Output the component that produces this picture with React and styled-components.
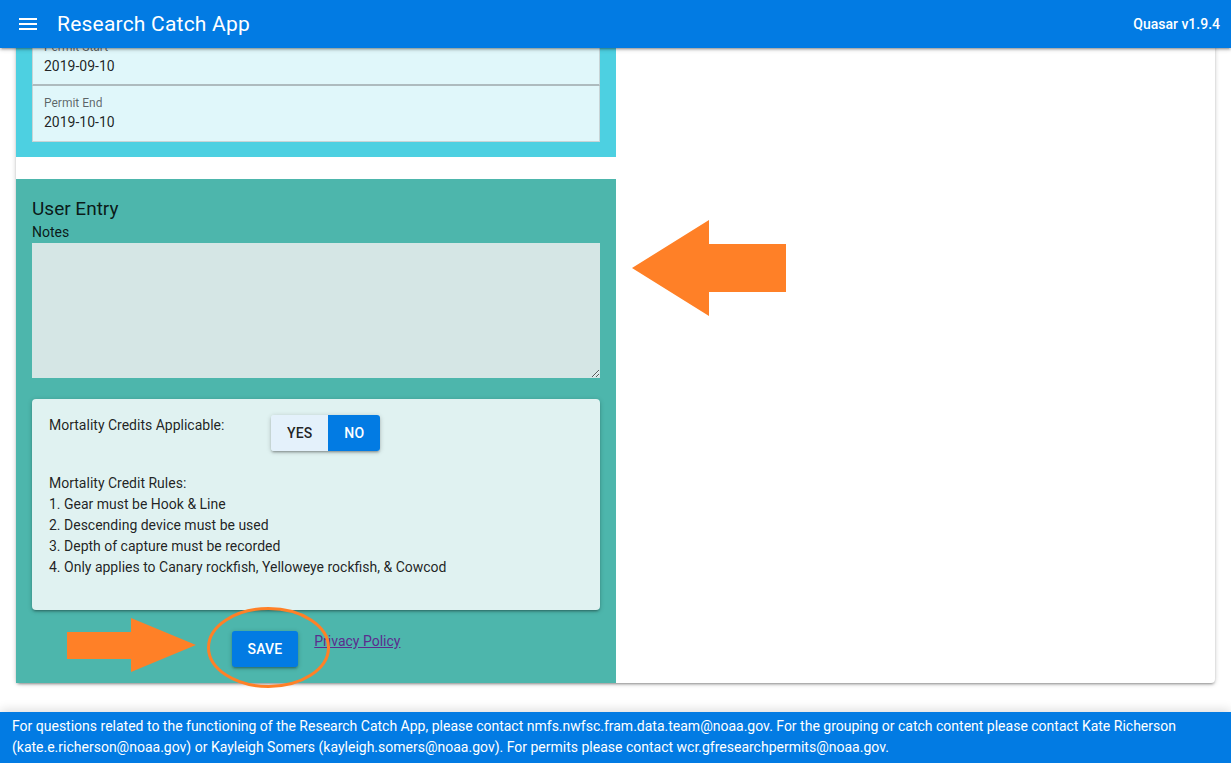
import React from "react";
import styled, { createGlobalStyle } from "styled-components";

const GlobalStyle = createGlobalStyle`
  html, body {
    margin: 0;
    padding: 0;
    height: 100%;
    overflow: hidden;
    background: #fff;
  }
  body {
    font-family: Roboto, "Liberation Sans", sans-serif;
    font-size: 14px;
    line-height: 1.5;
    color: rgba(0, 0, 0, 0.87);
    -webkit-font-smoothing: antialiased;
  }
  #root {
    height: 100%;
  }
`;

const PRIMARY = "#027be3";
const ORANGE = "#ff8027";

const Layout = styled.div`
  position: relative;
  display: flex;
  flex-direction: column;
  width: 1231px;
  height: 763px;
  overflow: hidden;
`;

const Header = styled.header`
  position: relative;
  z-index: 2;
  flex: 0 0 48px;
  display: flex;
  align-items: center;
  padding: 0 11px 0 12px;
  background: ${PRIMARY};
  color: #fff;
  box-shadow: 0 1px 5px rgba(0, 0, 0, 0.2), 0 2px 2px rgba(0, 0, 0, 0.14),
    0 3px 1px -2px rgba(0, 0, 0, 0.12);
`;

const MenuButton = styled.button`
  width: 32px;
  height: 32px;
  padding: 0;
  border: 0;
  background: transparent;
  color: inherit;
  display: flex;
  align-items: center;
  justify-content: center;
  svg {
    width: 24px;
    height: 24px;
    fill: currentColor;
  }
`;

const Title = styled.div`
  flex: 1;
  margin-left: 13px;
  font-size: 21px;
  line-height: 28px;
  letter-spacing: 0.01em;
`;

const Version = styled.div`
  font-size: 14px;
  font-weight: 500;
`;

const Main = styled.main`
  flex: 1;
  min-height: 0;
  overflow: hidden;
  padding: 0 16px;
`;

const Card = styled.div`
  margin-top: -34px;
  display: grid;
  grid-template-columns: 600px 1fr;
  background: #fff;
  border-radius: 4px;
  box-shadow: 0 1px 5px rgba(0, 0, 0, 0.2), 0 2px 2px rgba(0, 0, 0, 0.14),
    0 3px 1px -2px rgba(0, 0, 0, 0.12);
`;

const Column = styled.div`
  display: flex;
  flex-direction: column;
`;

const PermitSection = styled.section`
  background: #4dd0e1;
  padding: 16px 16px 15px;
  margin-bottom: 22px;
`;

const Field = styled.div`
  height: 56px;
  box-sizing: border-box;
  padding: 9px 11px 0;
  background: #e0f7fa;
  border: 1px solid #c8d4d6;
  border-top: 0;
  border-bottom: ${({ $strong }) => ($strong ? "2px solid #aebbbe" : "1px solid #c8d4d6")};
`;

const FieldLabel = styled.div`
  font-size: 12px;
  line-height: 17px;
  color: rgba(0, 0, 0, 0.6);
`;

const FieldValue = styled.div`
  font-size: 14px;
  line-height: 20px;
  color: rgba(0, 0, 0, 0.87);
`;

const EntrySection = styled.section`
  background: #4db6ac;
  padding: 16px;
`;

const Heading = styled.h2`
  margin: 0;
  font-size: 19px;
  font-weight: 400;
  line-height: 27px;
  color: rgba(0, 0, 0, 0.87);
`;

const NotesLabel = styled.label`
  display: block;
  font-size: 14px;
  line-height: 21px;
`;

const Notes = styled.textarea`
  display: block;
  box-sizing: border-box;
  width: 100%;
  height: 135px;
  margin: 0;
  border: 0;
  border-radius: 0;
  padding: 6px 8px;
  background: #d5e6e5;
  font: inherit;
  outline: none;
`;

const CreditCard = styled.div`
  margin-top: 21px;
  padding: 16px 17px 32px;
  background: #e0f2f1;
  border-radius: 4px;
  box-shadow: 0 1px 5px rgba(0, 0, 0, 0.2), 0 2px 2px rgba(0, 0, 0, 0.14),
    0 3px 1px -2px rgba(0, 0, 0, 0.12);
`;

const CreditRow = styled.div`
  display: flex;
  align-items: flex-start;
`;

const CreditLabel = styled.div`
  width: 222px;
  line-height: 21px;
`;

const Toggle = styled.div`
  display: flex;
  height: 36px;
  border-radius: 3px;
  overflow: hidden;
  box-shadow: 0 1px 5px rgba(0, 0, 0, 0.2), 0 2px 2px rgba(0, 0, 0, 0.14),
    0 3px 1px -2px rgba(0, 0, 0, 0.12);
`;

const ToggleOption = styled.button`
  border: 0;
  padding: 0 16px;
  font-family: inherit;
  font-size: 14px;
  font-weight: 500;
  text-transform: uppercase;
  letter-spacing: 0.01em;
  background: ${({ $active }) => ($active ? PRIMARY : "#e4f1fb")};
  color: ${({ $active }) => ($active ? "#fff" : "rgba(0,0,0,0.87)")};
`;

const Rules = styled.div`
  margin-top: 22px;
  line-height: 21px;
`;

const Actions = styled.div`
  margin-top: 21px;
  display: flex;
  align-items: flex-start;
  justify-content: center;
  gap: 16px;
`;

const SaveButton = styled.button`
  height: 36px;
  padding: 0 16px;
  border: 0;
  border-radius: 3px;
  background: ${PRIMARY};
  color: #fff;
  font-family: inherit;
  font-size: 14px;
  font-weight: 500;
  letter-spacing: 0.01em;
  box-shadow: 0 1px 5px rgba(0, 0, 0, 0.2), 0 2px 2px rgba(0, 0, 0, 0.14),
    0 3px 1px -2px rgba(0, 0, 0, 0.12);
`;

const PolicyLink = styled.a`
  line-height: 21px;
  color: #5b2d8e;
  text-decoration: underline;
`;

const Footer = styled.footer`
  position: relative;
  z-index: 2;
  flex: 0 0 51px;
  box-sizing: border-box;
  padding: 4px 12px 0;
  background: ${PRIMARY};
  color: #fff;
  font-size: 14px;
  line-height: 21px;
  box-shadow: 0 -2px 10px rgba(0, 0, 0, 0.14);
`;

// annotation arrows/circle drawn over the screenshot
const Annotations = styled.svg`
  position: absolute;
  left: 0;
  top: 0;
  z-index: 5;
  pointer-events: none;
`;

const rules = [
  "Mortality Credit Rules:",
  "1. Gear must be Hook & Line",
  "2. Descending device must be used",
  "3. Depth of capture must be recorded",
  "4. Only applies to Canary rockfish, Yelloweye rockfish, & Cowcod",
];

export default function App() {
  return (
    <>
      <GlobalStyle />
      <Layout>
        <Header>
          <MenuButton aria-label="Menu">
            <svg viewBox="0 0 24 24">
              <path d="M3 18h18v-2H3v2zm0-5h18v-2H3v2zm0-7v2h18V6H3z" />
            </svg>
          </MenuButton>
          <Title>Research Catch App</Title>
          <Version>Quasar v1.9.4</Version>
        </Header>

        <Main>
          <Card>
            <Column>
              <PermitSection>
                <Field $strong>
                  <FieldLabel>Permit Start</FieldLabel>
                  <FieldValue>2019-09-10</FieldValue>
                </Field>
                <Field>
                  <FieldLabel>Permit End</FieldLabel>
                  <FieldValue>2019-10-10</FieldValue>
                </Field>
              </PermitSection>

              <EntrySection>
                <Heading>User Entry</Heading>
                <NotesLabel>Notes</NotesLabel>
                <Notes />
                <CreditCard>
                  <CreditRow>
                    <CreditLabel>Mortality Credits Applicable:</CreditLabel>
                    <Toggle>
                      <ToggleOption>Yes</ToggleOption>
                      <ToggleOption $active>No</ToggleOption>
                    </Toggle>
                  </CreditRow>
                  <Rules>
                    {rules.map((r) => (
                      <div key={r}>{r}</div>
                    ))}
                  </Rules>
                </CreditCard>
                <Actions>
                  <SaveButton>SAVE</SaveButton>
                  <PolicyLink href="#">Privacy Policy</PolicyLink>
                </Actions>
              </EntrySection>
            </Column>
            <div />
          </Card>
        </Main>

        <Footer>
          For questions related to the functioning of the Research Catch App, please contact
          nmfs.nwfsc.fram.data.team@noaa.gov. For the grouping or catch content please contact Kate
          Richerson (kate.e.richerson@noaa.gov) or Kayleigh Somers (kayleigh.somers@noaa.gov). For
          permits please contact wcr.gfresearchpermits@noaa.gov.
        </Footer>

        <Annotations width="1231" height="763" viewBox="0 0 1231 763">
          <polygon
            fill={ORANGE}
            points="632,268 709,220 709,244 786,244 786,292 709,292 709,316"
          />
          <polygon
            fill={ORANGE}
            points="67,632 131,632 131,618 196,645 131,672 131,659 67,659"
          />
          <ellipse
            cx="268.5"
            cy="647.5"
            rx="60"
            ry="39"
            fill="none"
            stroke={ORANGE}
            strokeWidth="3"
          />
        </Annotations>
      </Layout>
    </>
  );
}
